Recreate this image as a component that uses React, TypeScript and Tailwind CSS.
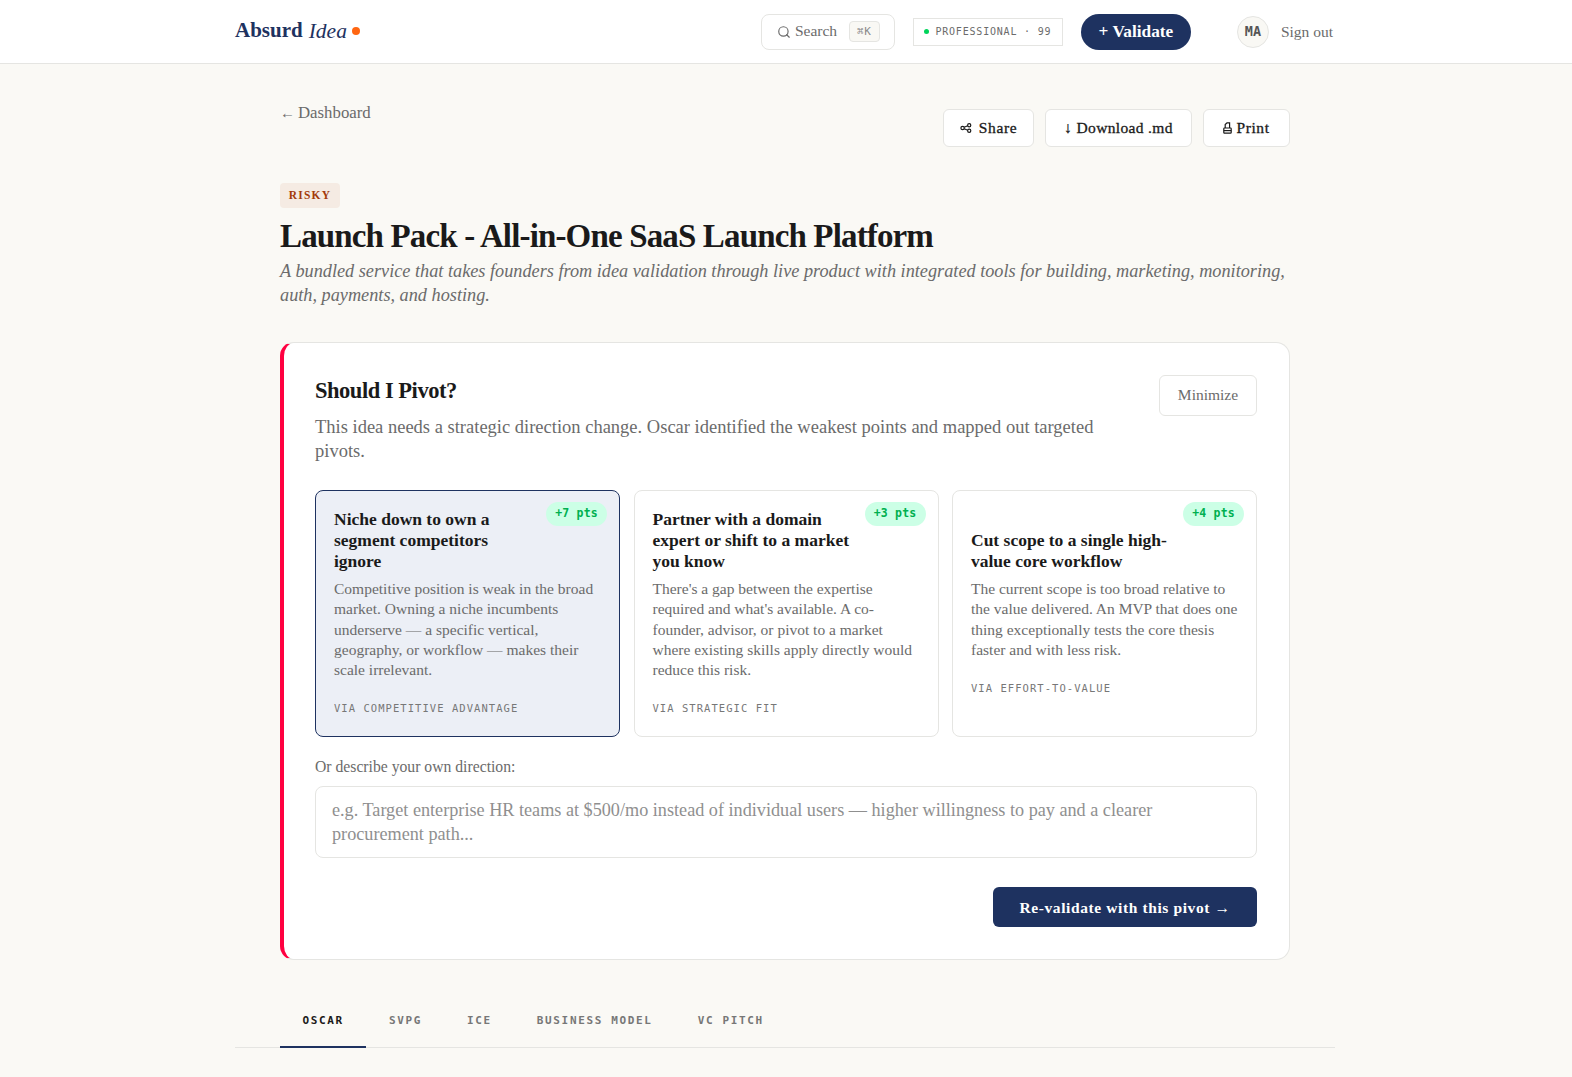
import { Search } from 'lucide-react';

const serif = "font-['Liberation_Serif',serif]";
const mono = "font-['DejaVu_Sans_Mono',monospace]";

const pivots = [
  {
    title: 'Niche down to own a segment competitors ignore',
    body: 'Competitive position is weak in the broad market. Owning a niche incumbents underserve — a specific vertical, geography, or workflow — makes their scale irrelevant.',
    via: 'VIA COMPETITIVE ADVANTAGE',
    pts: '+7 pts',
    selected: true,
  },
  {
    title: 'Partner with a domain expert or shift to a market you know',
    body: "There's a gap between the expertise required and what's available. A co-founder, advisor, or pivot to a market where existing skills apply directly would reduce this risk.",
    via: 'VIA STRATEGIC FIT',
    pts: '+3 pts',
    selected: false,
  },
  {
    title: 'Cut scope to a single high-value core workflow',
    body: 'The current scope is too broad relative to the value delivered. An MVP that does one thing exceptionally tests the core thesis faster and with less risk.',
    via: 'VIA EFFORT-TO-VALUE',
    pts: '+4 pts',
    selected: false,
  },
];

const tabs = ['OSCAR', 'SVPG', 'ICE', 'BUSINESS MODEL', 'VC PITCH'];

function ShareIcon() {
  return (
    <svg width="12" height="10" viewBox="0 0 12 10" fill="none" stroke="currentColor" strokeWidth="1.2">
      <circle cx="2.6" cy="5" r="1.7" />
      <circle cx="9.2" cy="2.2" r="1.6" />
      <circle cx="9.2" cy="7.8" r="1.6" />
      <path d="M4.2 4.3 7.7 2.8M4.2 5.7l3.5 1.5" />
    </svg>
  );
}

function PrintIcon() {
  return (
    <svg width="9" height="12" viewBox="0 0 9 12" fill="none" stroke="currentColor" strokeWidth="1.2">
      <path d="M2.2 6V2.6L4 .8h2.6V6" />
      <rect x="0.8" y="6" width="7.4" height="5.2" rx="0.8" />
      <path d="M0.8 8.6h7.4" />
    </svg>
  );
}

function Header() {
  return (
    <header className="h-16 border-b border-[#e5e5e2] bg-white">
      <div className="ml-[235px] flex h-[63px] w-[1100px] items-center">
        <div className={`${serif} -mt-px flex items-center text-[21px] text-[#1e3260]`}>
          <span className="font-bold">Absurd</span>
          <span className="ml-[6px] text-[21.5px] italic">Idea</span>
          <span className="ml-[5px] h-2 w-2 rounded-full bg-[#ff6611]" />
        </div>
        <div className="ml-auto flex items-center">
          <div className="flex h-9 w-[134px] items-center rounded-lg border border-[#e5e5e2] bg-white pl-[15px] text-[#6b6b6b]">
            <Search size={14} strokeWidth={2} />
            <span className={`${serif} ml-[4px] -mt-px text-[15.5px]`}>Search</span>
            <span className={`${mono} ml-[12px] rounded border border-[#e5e5e2] bg-[#f9f8f4] px-[7px] py-[3px] text-[11px] leading-[13px] tracking-[0.6px] text-[#8a8a8a]`}>⌘K</span>
          </div>
          <div className={`${mono} ml-[18px] flex h-7 w-[150px] items-center justify-center border border-[#e5e5e2] bg-white text-[10px] tracking-[0.8px] text-[#6b6b6b]`}>
            <span className="mr-[6px] h-[5px] w-[5px] rounded-full bg-[#00d45a]" />
            PROFESSIONAL · 99
          </div>
          <button className={`${serif} ml-[18px] h-9 w-[110px] rounded-full bg-[#1e3260] text-[17.3px] font-bold text-white`}>+ Validate</button>
          <div className={`${mono} ml-[46px] flex h-8 w-8 items-center justify-center rounded-full border border-[#e5e5e2] bg-[#f9f8f4] text-[13.5px] font-bold text-[#555555]`}>MA</div>
          <span className={`${serif} ml-[12px] mr-[2px] text-[15.5px] text-[#6b6b6b]`}>Sign out</span>
        </div>
      </div>
    </header>
  );
}

function PivotCard({ pivot }: { pivot: (typeof pivots)[number] }) {
  return (
    <div
      className={`relative flex w-[305px] flex-col rounded-lg border px-[18px] pt-[18px] ${
        pivot.selected ? 'border-[#1e3260] bg-[#eceff6]' : 'border-[#e5e5e2] bg-white'
      }`}
    >
      <span className={`${mono} absolute right-[12px] top-[11px] rounded-full bg-[#ccffe6] px-[9px] pb-[6px] pt-[4px] text-[11.5px] font-bold leading-[14px] tracking-[0.2px] text-[#00b050]`}>
        {pivot.pts}
      </span>
      <div className="flex min-h-[63px] flex-col justify-end">
        <h3 className={`${serif} w-[205px] text-[17.5px] font-bold leading-[21px] text-[#1a1a1a]`}>{pivot.title}</h3>
      </div>
      <p className={`${serif} mt-[7px] text-[15.5px] leading-[20.25px] text-[#6b6b6b]`}>{pivot.body}</p>
      <div className={`${mono} mb-[21px] mt-[21px] text-[10.5px] leading-[14px] tracking-[1.05px] text-[#777777]`}>{pivot.via}</div>
    </div>
  );
}

export default function App() {
  return (
    <div className="min-h-[1077px] bg-[#faf9f5]">
      <Header />
      <main className="ml-[235px] w-[1100px]">
        <div className="px-[45px]">
          <div className="flex items-start justify-between pt-[36px]">
            <a className={`${serif} mt-px flex items-baseline gap-[3px] text-[16.8px] leading-6 text-[#6b6b6b]`}>
              <span className="text-[15px]">←</span>
              Dashboard
            </a>
            <div className={`${serif} mt-[9px] flex gap-[11px] text-[15.5px] tracking-[0.35px] text-[#1a1a1a] [-webkit-text-stroke:0.3px]`}>
              <button className="flex h-[38px] w-[91px] items-center justify-center gap-[7px] rounded-md border border-[#e5e5e2] bg-white tracking-[0.6px]">
                <ShareIcon />
                Share
              </button>
              <button className="h-[38px] w-[147px] rounded-md border border-[#e5e5e2] bg-white">↓ Download .md</button>
              <button className="flex h-[38px] w-[87px] items-center justify-center gap-[4px] rounded-md border border-[#e5e5e2] bg-white tracking-[0.6px]">
                <PrintIcon />
                Print
              </button>
            </div>
          </div>

          <span className={`${serif} mt-[36px] flex h-[25px] w-[60px] items-center justify-center rounded bg-[#f5ebe3] text-[11.5px] font-bold tracking-[1.2px] text-[#a33a0a]`}>RISKY</span>
          <h1 className={`${serif} mt-[7px] text-[33px] font-bold leading-[42px] tracking-[-0.85px] text-[#1a1a1a]`}>Launch Pack - All-in-One SaaS Launch Platform</h1>
          <p className={`${serif} mt-[2px] text-[18.26px] italic leading-6 text-[#6b6b6b]`}>
            A bundled service that takes founders from idea validation through live product with integrated tools for building, marketing, monitoring, auth, payments, and hosting.
          </p>

          <section className="mt-[35px] rounded-[14px] border border-l-4 border-[#e5e5e2] border-l-[#ff0040] bg-white pb-[32px] pl-[31px] pr-[32px] pt-[32px]">
            <div className="flex items-start justify-between">
              <div className="w-[800px]">
                <h2 className={`${serif} mt-px text-[22.5px] font-bold leading-[30px] tracking-[-0.47px] text-[#1a1a1a]`}>Should I Pivot?</h2>
                <p className={`${serif} mt-[9px] text-[18.5px] leading-6 text-[#6b6b6b]`}>
                  This idea needs a strategic direction change. Oscar identified the weakest points and mapped out targeted pivots.
                </p>
              </div>
              <button className={`${serif} h-[41px] w-[98px] rounded-md border border-[#e5e5e2] bg-white pb-[2px] text-[15.5px] text-[#6b6b6b]`}>Minimize</button>
            </div>

            <div className="mt-[27px] flex justify-between">
              {pivots.map((pivot) => (
                <PivotCard key={pivot.pts} pivot={pivot} />
              ))}
            </div>

            <label className={`${serif} mt-[20px] block text-[15.7px] leading-5 text-[#6b6b6b]`}>Or describe your own direction:</label>
            <div className={`${serif} mt-[9px] h-[72px] rounded-lg border border-[#e5e5e2] bg-white px-4 py-[11px] text-[18.2px] leading-6 text-[#8f8f8f]`}>
              e.g. Target enterprise HR teams at $500/mo instead of individual users — higher willingness to pay and a clearer procurement path...
            </div>
            <div className="mt-[29px] flex justify-end">
              <button className={`${serif} h-10 w-[264px] rounded-md bg-[#1e3260] text-[15.5px] font-bold tracking-[0.6px] text-white`}>Re-validate with this pivot →</button>
            </div>
          </section>
        </div>

        <nav className="mt-[34px] flex border-b border-[#e5e5e2] pl-[45px]">
          {tabs.map((tab, i) => (
            <div
              key={tab}
              className={`${mono} -mb-px h-[54px] px-[22.5px] pt-[19px] text-[11px] font-bold leading-4 tracking-[1.65px] ${
                i === 0 ? 'border-b-2 border-[#1e3260] text-[#1a1a1a]' : 'text-[#777777]'
              }`}
            >
              {tab}
            </div>
          ))}
        </nav>
      </main>
    </div>
  );
}
